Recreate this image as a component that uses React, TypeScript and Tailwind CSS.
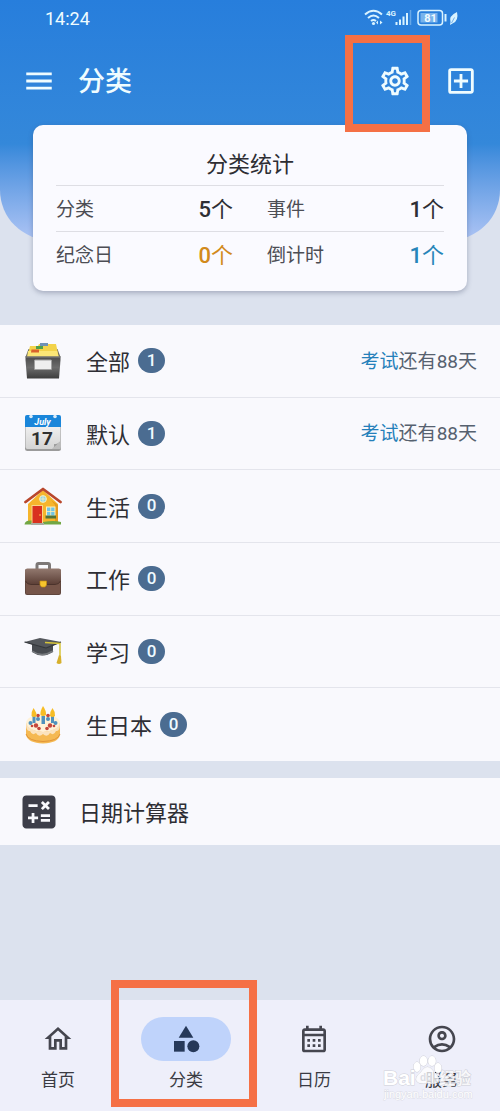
import type { ReactNode } from "react";
import {
    MdMenu,
    MdOutlineSettings,
    MdOutlineAddBox,
    MdCalculate,
    MdOutlineHome,
    MdCategory,
    MdOutlineCalendarMonth,
    MdOutlineAccountCircle,
} from "react-icons/md";

function FileBoxIcon() {
    return (
        <svg viewBox="0 0 38 38" className="size-[38px]" aria-hidden="true">
            <defs>
                <linearGradient id="box" x1="0" y1="0" x2="0" y2="1">
                    <stop offset="0" stopColor="#4b4b4b" />
                    <stop offset="0.5" stopColor="#6c6c6c" />
                    <stop offset="1" stopColor="#3d3d3d" />
                </linearGradient>
            </defs>
            <path d="M1.5 15 L4.5 7 H33.5 L36.5 15 Z" fill="#6b6a62" />
            <path d="M3 16 L6 4 H14 L15 2 H32 L35 16 Z" fill="#f3d34a" />
            <path d="M4 9 H33 L35 16 H3 Z" fill="#fbe676" />
            <path d="M16 1 H24 V4 H16 Z" fill="#6f91b5" />
            <path d="M12 4 H19 V7 H12 Z" fill="#4fa04a" />
            <path d="M7.5 7.500 H15 V10.500 H7 Z" fill="#d9622b" />
            <path d="M1.500 14.500 H36.500 V18 L35 36.500 H3 L1.500 18 Z" fill="url(#box)" />
            <path d="M1.500 15 H36.500" stroke="#858585" />
            <rect x="10.500" y="18" width="17" height="9.500" rx="0.500" fill="#eeeeee" stroke="#a0a0a0" />
        </svg>
    );
}

function CalendarIcon() {
    return (
        <svg viewBox="0 0 38 38" className="size-[38px]" aria-hidden="true">
            <defs>
                <linearGradient id="paper" x1="0" y1="0" x2="0" y2="1">
                    <stop offset="0" stopColor="#fafafa" />
                    <stop offset="1" stopColor="#d4d4d4" />
                </linearGradient>
            </defs>
            <rect x="1" y="6" width="36" height="31" rx="2.500" fill="#9b9b9b" />
            <rect x="1.500" y="4" width="35" height="31" rx="2" fill="url(#paper)" />
            <path d="M1 3 Q1 1 3 1 H35 Q37 1 37 3 V13 H1 Z" fill="#1a86da" />
            <circle cx="7" cy="2.500" r="1.800" fill="#dcebf7" />
            <circle cx="31" cy="2.500" r="1.800" fill="#dcebf7" />
            <path d="M36.500 27 L28 35 H36.500 Z" fill="#bdbdbd" />
            <path d="M36.500 27 Q34 31 30 30 Q31 33 28 35 Z" fill="#8f8f8f" />
            <text x="18.500" y="11" textAnchor="middle" fontSize="9" fontWeight="700" fontStyle="italic" fill="#fff" fontFamily="Roboto, sans-serif">July</text>
            <text x="18" y="31" textAnchor="middle" fontSize="19" fontWeight="700" fill="#303030" fontFamily="Roboto, sans-serif">17</text>
        </svg>
    );
}

function HouseIcon() {
    return (
        <svg viewBox="0 0 38 38" className="size-[38px]" aria-hidden="true">
            <path d="M4 17 L19 3 L34 17 V36 H4 Z" fill="#f6b52c" />
            <path d="M27 13 L34 18 V36 H31 V18 Z" fill="#e59a1d" />
            <path d="M1.500 15 L19 2 L36.500 15" fill="none" stroke="#b9472c" strokeWidth="2.800" strokeLinejoin="round" strokeLinecap="round" />
            <circle cx="19" cy="12" r="3.400" fill="#8bd3e8" stroke="#fff0b8" />
            <path d="M19 9 V15 M16 12 H22" stroke="#fff0b8" strokeWidth="0.800" />
            <rect x="7.500" y="18" width="11.500" height="18" fill="#f7d68a" />
            <rect x="8.500" y="19" width="9.500" height="17" fill="#d9301f" />
            <circle cx="16" cy="28" r="0.800" fill="#ffd34d" />
            <rect x="22.500" y="20" width="8.500" height="9" fill="#72c4e4" stroke="#fff0b8" />
            <path d="M26.700 20 V29 M22.500 24.500 H31" stroke="#fff0b8" strokeWidth="0.800" />
            <rect x="21.500" y="28.500" width="10.500" height="3" fill="#51733a" />
            <path d="M0.500 37.500 Q1 33 7.500 33.500 V37.500 Z M19 37.500 V35 Q30 33 37 35 V37.500 Z" fill="#72a744" />
            <path d="M7 36 H20 V38 H7 Z" fill="#a9aca2" />
        </svg>
    );
}

function BriefcaseIcon() {
    return (
        <svg viewBox="0 0 38 38" className="size-[38px]" aria-hidden="true">
            <defs>
                <linearGradient id="leather" x1="0" y1="0" x2="0" y2="1">
                    <stop offset="0" stopColor="#92796f" />
                    <stop offset="1" stopColor="#5d4037" />
                </linearGradient>
            </defs>
            <path d="M13 9 V5 Q13 3.500 14.500 3.500 H24 Q25.500 3.500 25.500 5 V9" fill="none" stroke="#7d7877" strokeWidth="3" />
            <rect x="1" y="9" width="36" height="26" rx="2" fill="#60463d" />
            <path d="M2 21 H36 V33 Q36 34 35 34 H3 Q2 34 2 33 Z" fill="#765549" />
            <path d="M3 8.500 H35 Q37 8.500 37 11 V20 Q36 24 31 24 H7 Q2 24 1 20 V11 Q1 8.500 3 8.500 Z" fill="url(#leather)" />
            <path d="M1.500 21 Q3 24.500 7 24.500 H31 Q35 24.500 36.500 21" fill="none" stroke="#4b332c" />
            <path d="M16 21 H22.500 V25 L21 27 H17.500 L16 25 Z" fill="#f7c52d" stroke="#c68d13" strokeWidth="0.700" />
        </svg>
    );
}

function GradCapIcon() {
    return (
        <svg viewBox="0 0 38 38" className="size-[38px]" aria-hidden="true">
            <path d="M8 11 V20 Q18 27 29 20 V12 Z" fill="#484b50" />
            <path d="M8 19 Q18 26 29 19" fill="none" stroke="#777a7e" strokeWidth="1.500" />
            <path d="M0.500 10 L16 6 L37 10 L22 17 Z" fill="#54575c" />
            <path d="M0.500 10 L22 16 L37 10" fill="none" stroke="#35383c" strokeWidth="1.200" />
            <path d="M21 10.500 L36 11.500 V26" fill="none" stroke="#d6c43a" strokeWidth="1.500" />
            <path d="M35 23 L37 24 L37.500 31 Q35 33 32.500 31 Z" fill="#d7b02c" />
        </svg>
    );
}

function CakeIcon() {
    return (
        <svg viewBox="0 0 38 38" className="size-[38px]" aria-hidden="true">
            <path d="M2 17 V29 Q4 37 19 37.500 Q34 37 36 29 V17 Z" fill="#f5b952" />
            <path d="M2 28 Q4 35 19 35.500 Q34 35 36 28" fill="none" stroke="#e29538" />
            <ellipse cx="19" cy="17" rx="17" ry="9" fill="#fff2d8" />
            <path d="M2 17 Q2 26 6 25 Q8 30 12 27 Q15 32 19 28 Q23 32 26 27 Q30 30 32 25 Q36 26 36 17 Q33 25 19 26 Q5 25 2 17 Z" fill="#fbe3be" />
            <g fill="#4f91bd">
                <rect x="8.500" y="10" width="3" height="7" />
                <rect x="17.500" y="10" width="3.500" height="8" />
                <rect x="27" y="10" width="3" height="7" />
                <circle cx="6.500" cy="17" r="2" />
                <circle cx="31.500" cy="17" r="2" />
                <circle cx="14" cy="13" r="2" />
                <circle cx="24" cy="13" r="2" />
            </g>
            <g fill="#c4473c">
                <circle cx="12" cy="19.500" r="2.200" />
                <circle cx="26" cy="19.500" r="2.200" />
                <circle cx="14" cy="9.500" r="1.800" />
                <circle cx="24" cy="9.500" r="1.800" />
                <circle cx="15" cy="22.500" r="1.800" />
                <circle cx="23" cy="22.500" r="1.800" />
                <circle cx="8" cy="20" r="1.300" />
                <circle cx="30" cy="20" r="1.300" />
            </g>
            <g fill="#f7bd25">
                <path d="M9.500 2 Q13 7 12.500 10 Q10 12 7.500 10 Q7 6 9.500 2 Z" />
                <path d="M19 0 Q22.500 5 22 9 Q19 11 16.500 9 Q16 5 19 0 Z" />
                <path d="M28.500 2 Q31.500 6 31 10 Q28.500 12 26 10 Q25.500 6 28.500 2 Z" />
            </g>
        </svg>
    );
}

function StatusIcons() {
    return (
        <svg viewBox="0 0 96 20" className="h-5 w-24" fill="none" stroke="#d9f3ff" aria-hidden="true">
            {/* Wifi */}
            <path d="M1 6.500 Q9.500 -1 18 6.500 M4 10 Q9.500 5 15 10 M7 13 Q9.500 11 12 13" strokeWidth="2" />
            <circle cx="9.500" cy="15.500" r="1.600" fill="#d9f3ff" stroke="none" />
            <path d="M14 12.500 L12 14.500 L14 16.500 Z M16 12.500 L18.500 14.500 L16 16.500 Z" fill="#d9f3ff" stroke="none" />
            {/* Signal */}
            <text x="22" y="8" fontSize="8" fontWeight="700" fill="#d9f3ff" stroke="none" fontFamily="Roboto, sans-serif">4G</text>
            <path d="M32.500 17 V14 M36 17 V11.500 M39.500 17 V8.500 M43 17 V5" strokeWidth="2" />
            <path d="M46.500 17 V2" strokeOpacity="0.350" strokeWidth="1.500" />
            {/* Battery */}
            <rect x="54" y="2.500" width="24.500" height="14.500" rx="3" strokeWidth="1.500" />
            <rect x="56.500" y="5" width="17" height="9.500" fill="#d9f3ff" fillOpacity="0.450" stroke="none" />
            <text x="66.500" y="14" textAnchor="middle" fontSize="11" fontWeight="700" fill="#f0fbff" stroke="none" fontFamily="Roboto, sans-serif">81</text>
            <path d="M81.500 6 V13.500" strokeWidth="2" />
            <path d="M93 4 Q84.500 8 86.500 14 L86 17 L88.500 15.500 Q95 13 93 4 Z" fill="#d9f3ff" stroke="none" />
            <path d="M87.500 15 L90.500 9.500" stroke="#2b80da" strokeWidth="0.600" />
        </svg>
    );
}

function Watermark() {
    return (
        <svg viewBox="0 0 96 50" className="pointer-events-none absolute right-6 bottom-2 h-[50px] w-24" aria-hidden="true">
            <g fill="#fff" stroke="#cfd0d8" strokeWidth="1" paintOrder="stroke">
                <ellipse cx="37" cy="14" rx="3.500" ry="5" />
                <ellipse cx="43.500" cy="8" rx="3.800" ry="5" />
                <ellipse cx="52" cy="8" rx="3.800" ry="5" />
                <ellipse cx="58" cy="15" rx="3.500" ry="5" />
                <path d="M47.500 14 Q51 14 54 19 Q59 23 58.500 27 Q57 32 47.500 30 Q38 32 36 27 Q35.500 23 41 19 Q44 14 47.500 14 Z" fillOpacity="0.750" />
                <text x="3" y="32" fontSize="21" fontWeight="700" fontFamily="Liberation Sans, sans-serif">Bai</text>
                <text x="59" y="31" fontSize="16" fontWeight="700" fillOpacity="0.800" fontFamily="Noto Sans CJK SC, sans-serif">经验</text>
                <text x="4" y="45" fontSize="11" strokeOpacity="0.600" fontFamily="Liberation Sans, sans-serif">jingyan.baidu.com</text>
            </g>
            <text x="40" y="28" fontSize="10" fontWeight="700" fill="#dcdde4" fontFamily="Liberation Sans, sans-serif">du</text>
        </svg>
    );
}

interface Category {
    name: string;
    count: number;
    icon: ReactNode;
    next?: { title: string; days: number };
}

const categories: Category[] = [
    { name: "全部", count: 1, icon: <FileBoxIcon />, next: { title: "考试", days: 88 } },
    { name: "默认", count: 1, icon: <CalendarIcon />, next: { title: "考试", days: 88 } },
    { name: "生活", count: 0, icon: <HouseIcon /> },
    { name: "工作", count: 0, icon: <BriefcaseIcon /> },
    { name: "学习", count: 0, icon: <GradCapIcon /> },
    { name: "生日本", count: 0, icon: <CakeIcon /> },
];

const stats = [
    { label: "分类", value: 5, color: "text-[#2e2e34]" },
    { label: "事件", value: 1, color: "text-[#2e2e34]" },
    { label: "纪念日", value: 0, color: "text-[#d28a1c]" },
    { label: "倒计时", value: 1, color: "text-[#2785b9]" },
];

const tabs = [
    { label: "首页", Icon: MdOutlineHome },
    { label: "分类", Icon: MdCategory, active: true },
    { label: "日历", Icon: MdOutlineCalendarMonth },
    { label: "服务", Icon: MdOutlineAccountCircle },
];

function StatRow({ items }: { items: typeof stats }) {
    return (
        <dl className="grid h-[46px] grid-cols-2 gap-[34px] border-t border-[#dedee4]">
            {items.map((s) => (
                <div key={s.label} className="flex items-center justify-between">
                    <dt className="text-[19px] text-[#4c4d54]">{s.label}</dt>
                    <dd className={`text-[22px] ${s.color}`}>
                        <span className="font-[Roboto] font-medium">{s.value}</span>个
                    </dd>
                </div>
            ))}
        </dl>
    );
}

export default function App() {
    return (
        <div className="relative flex min-h-screen flex-col bg-[#dce2ee] font-['Noto_Sans_CJK_SC',sans-serif] text-[#2e2e34]">
            {/* Header */}
            <header className="relative rounded-b-[50px] bg-linear-to-b from-[#277edc] from-0% via-[#3488da] via-60% to-[#adc4f4] pb-[115px] text-[#effcff]">
                <div className="flex h-9 items-center justify-between pr-10 pl-[45px]">
                    <span className="font-[Roboto] text-[18px]">14:24</span>
                    <StatusIcons />
                </div>
                <div className="flex h-[89px] items-center px-[22px]">
                    <button type="button" aria-label="菜单">
                        <MdMenu className="size-[34px]" />
                    </button>
                    <h1 className="ml-[22px] text-[27px] font-medium">分类</h1>
                    <button type="button" aria-label="设置" className="ml-auto">
                        <MdOutlineSettings className="size-[34px]" />
                    </button>
                    <button type="button" aria-label="新建" className="ml-8">
                        <MdOutlineAddBox className="size-[34px]" />
                    </button>
                </div>
            </header>

            {/* Stats card */}
            <section className="relative mx-[33px] -mt-[115px] rounded-[10px] bg-[#fafaff] px-[23px] pt-3.5 pb-3.5 shadow-[0_2px_5px_rgba(60,70,100,0.35)]">
                <h2 className="h-[46px] text-center text-[22px] leading-[46px]">分类统计</h2>
                <StatRow items={stats.slice(0, 2)} />
                <StatRow items={stats.slice(2)} />
            </section>

            {/* Category list */}
            <ul className="mt-[34px] grid h-[436px] auto-rows-fr divide-y divide-[#e4e5ec] bg-[#f9f9fd]">
                {categories.map((c) => (
                    <li key={c.name} className="flex items-center pr-[23px] pl-6">
                        {c.icon}
                        <span className="ml-6 text-[22px]">{c.name}</span>
                        <span className="ml-2 flex h-[25px] w-[27px] items-center justify-center rounded-full bg-[#4b6c91] font-[Roboto] text-[17px] font-medium text-[#effaff]">
                            {c.count}
                        </span>
                        {c.next && (
                            <span className="ml-auto text-[19px] text-[#56616f]">
                                <span className="text-[#2580ba]">{c.next.title}</span>
                                还有<span className="font-[Roboto]">{c.next.days}</span>天
                            </span>
                        )}
                    </li>
                ))}
            </ul>

            {/* Tools */}
            <button type="button" className="mt-[17px] flex h-[67px] items-center bg-[#f9f9fd] pl-[17px] text-left">
                <MdCalculate className="size-11 text-[#3d3e49]" />
                <span className="ml-[18px] text-[22px]">日期计算器</span>
            </button>

            {/* Bottom tabs */}
            <nav className="relative mt-auto flex justify-between bg-[#eeeffa] px-[13px] pt-[17px] pb-5">
                {tabs.map(({ label, Icon, active }) => (
                    <button key={label} type="button" aria-current={active ? "page" : undefined} className="flex w-[90px] flex-col items-center gap-1.5">
                        <span className={active ? "flex h-11 w-full items-center justify-center rounded-full bg-[#bfd3fb] text-[#26395a]" : "flex h-11 w-full items-center justify-center text-[#45464f]"}>
                            <Icon className="size-8" />
                        </span>
                        <span className="text-[17px] leading-6 text-[#3a3b43]">{label}</span>
                    </button>
                ))}
                <div className="pointer-events-none absolute -top-5 left-[111px] h-[127px] w-[146px] border-8 border-[#f57045]" />
                <Watermark />
            </nav>

            <div className="pointer-events-none absolute top-[35px] right-[70px] h-[97px] w-[85px] border-8 border-[#f57045]" />
        </div>
    );
}
